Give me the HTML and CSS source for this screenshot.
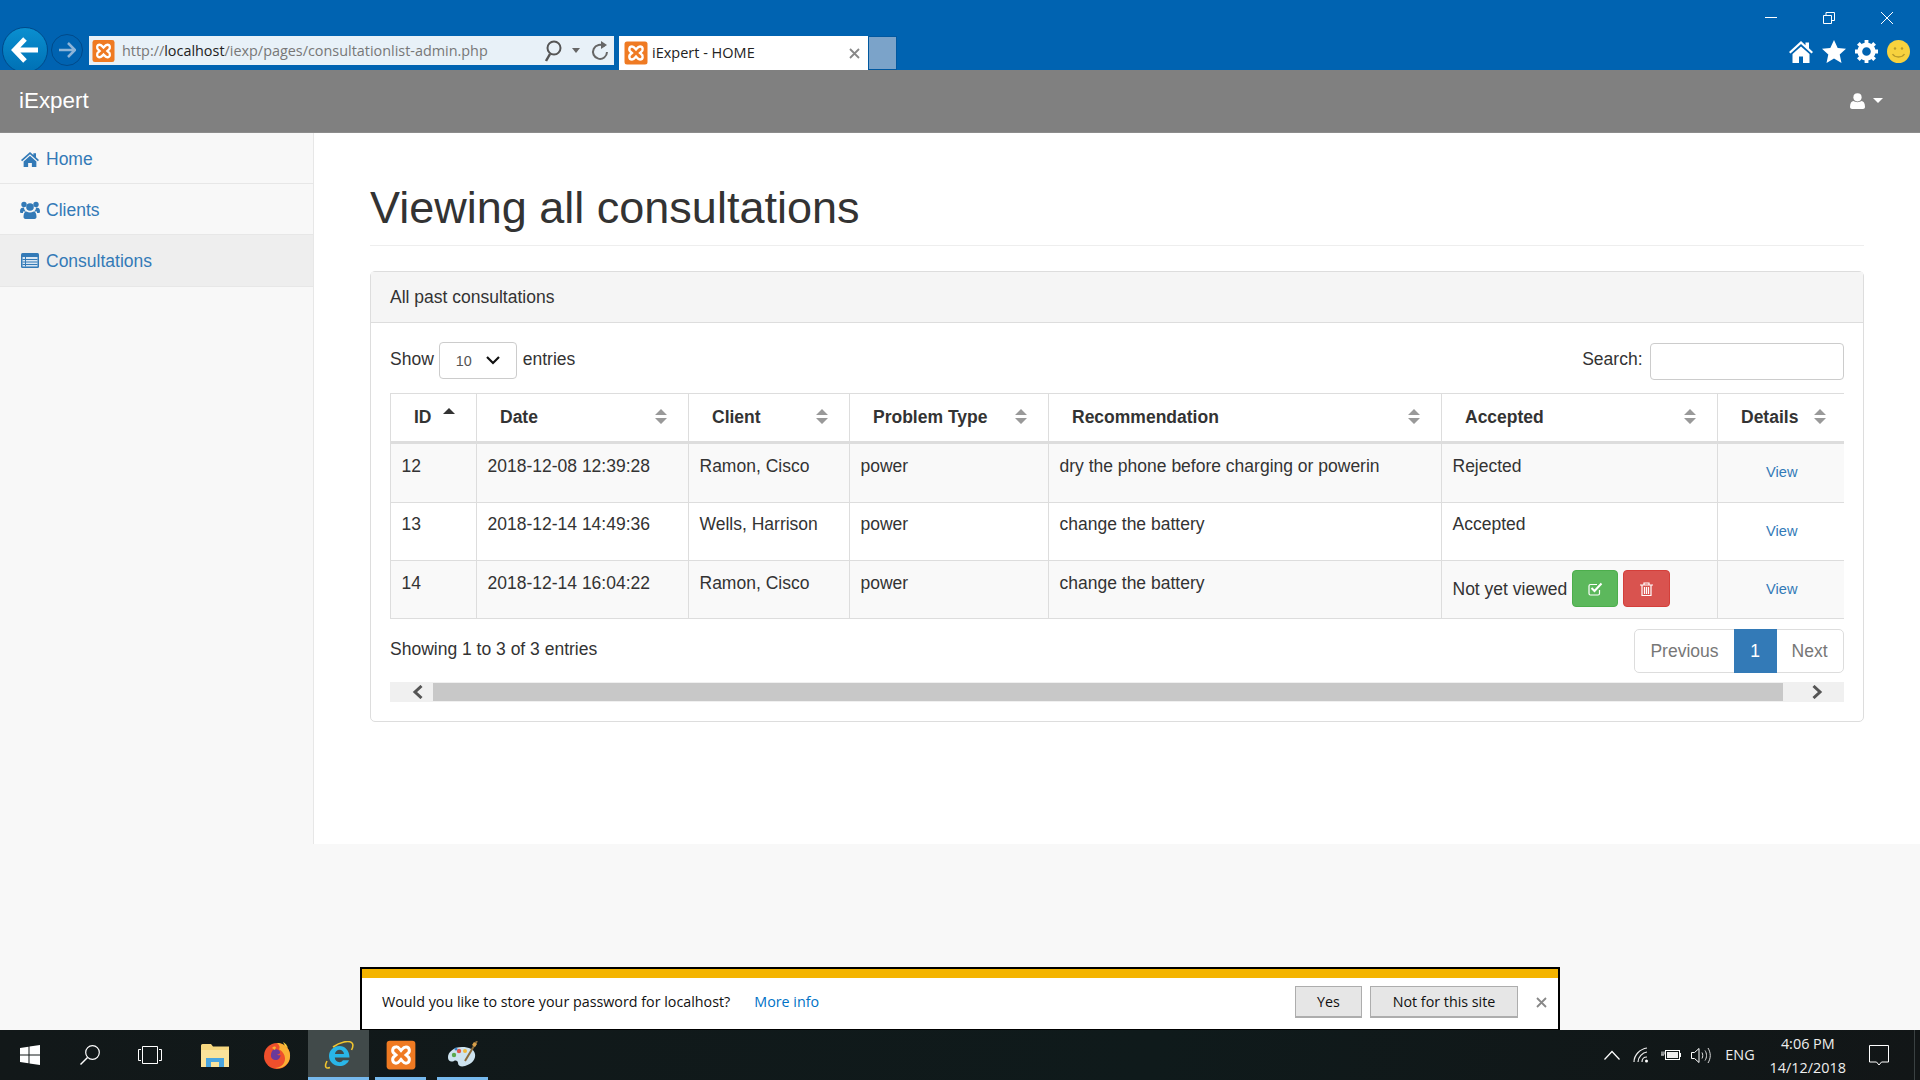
FILE: index.html
```html
<!DOCTYPE html>
<html lang="en">
<head>
  <meta charset="UTF-8">
  <title>iExpert - HOME</title>
  <link rel="stylesheet" href="styles.css">
</head>
<body>
  <svg class="defs" width="0" height="0">
    <symbol id="xampp" viewBox="0 0 24 24">
      <rect x="0.5" y="0.5" width="23" height="23" rx="2.5" fill="#ef7a22"/>
      <path d="M8 5.500c-3.200 0-3.400 4.200-1.200 5.400L8 12l-1.200 1.100C4.600 14.300 4.800 18.500 8 18.500c2 0 3-1.800 4-2.900 1 1.100 2 2.900 4 2.900 3.200 0 3.400-4.200 1.200-5.400L16 12l1.200-1.100c2.200-1.200 2-5.400-1.200-5.400-2 0-3 1.800-4 2.900-1-1.100-2-2.900-4-2.900z" fill="none" stroke="#fff" stroke-width="2.400"/>
    </symbol>
    <symbol id="sort" viewBox="0 0 12 15">
      <path d="M6 0l6 6H0zM0 9h12l-6 6z" fill="#999"/>
    </symbol>
  </svg>

  <!-- browser chrome -->
  <div class="chrome">
    <div class="nav-group">
      <div class="back-btn">
        <svg width="28" height="26" viewBox="0 0 28 26"><path d="M14 2L3.500 13 14 24M4 13h23" fill="none" stroke="#fff" stroke-width="5"/></svg>
      </div>
      <div class="forward-btn">
        <svg width="18" height="16" viewBox="0 0 18 16"><path d="M10 1l7 7-7 7M17 8H1" fill="none" stroke="#8db4d8" stroke-width="2.500"/></svg>
      </div>
      <div class="address-bar">
        <svg class="favicon" width="23" height="24"><use href="#xampp"/></svg>
        <span class="url">http://<b>localhost</b>/iexp/pages/consultationlist-admin.php</span>
        <svg class="addr-search" width="22" height="24" viewBox="0 0 22 24"><circle cx="13" cy="9" r="6.500" fill="none" stroke="#555" stroke-width="2"/><path d="M9 15l-4 7" stroke="#555" stroke-width="2.500"/></svg>
        <span class="addr-caret"></span>
        <svg class="addr-reload" width="18" height="22" viewBox="0 0 18 22"><path d="M13.500 6.500A7 7 0 1 0 16 12" fill="none" stroke="#666" stroke-width="2"/><path d="M10 1l6 4-6 4z" fill="#666"/></svg>
      </div>
      <div class="tab">
        <svg class="favicon" width="24" height="24"><use href="#xampp"/></svg>
        <span class="tab-title">iExpert - HOME</span>
        <svg class="tab-close" width="11" height="11" viewBox="0 0 11 11"><path d="M1 1l9 9M10 1l-9 9" stroke="#888" stroke-width="1.800"/></svg>
      </div>
      <div class="new-tab"></div>
    </div>
    <div class="chrome-right">
      <div class="window-controls">
        <svg width="12" height="12" viewBox="0 0 12 12"><path d="M0 5.500h12" stroke="#fff"/></svg>
        <svg width="12" height="12" viewBox="0 0 12 12"><path d="M0.500 3.500h8v8h-8zM3 3.500V0.500h8.500v8H8.500" fill="none" stroke="#fff"/></svg>
        <svg width="12" height="12" viewBox="0 0 12 12"><path d="M0 0l12 12M12 0L0 12" stroke="#fff"/></svg>
      </div>
      <div class="toolbar">
        <svg width="24" height="22" viewBox="0 0 24 22"><path d="M12 0L0 11l1.500 1.500L12 3l10.500 9.500L24 11l-4-3.700V1.500h-3.500v2.700zM3.500 13v9h6.500v-6.500h4V22h6.500v-9L12 5.500z" fill="#fff"/></svg>
        <svg width="24" height="23" viewBox="0 0 24 23"><path d="M12 0l3.700 8 8.300.800-6.300 5.600L19.500 23 12 18.500 4.500 23l1.800-8.600L0 8.800 8.300 8z" fill="#fff"/></svg>
        <svg width="23" height="23" viewBox="0 0 24 24"><circle cx="12" cy="12" r="7" fill="none" stroke="#fff" stroke-width="5"/><path d="M12 12V0M12 12V24M12 12H0M12 12H24M12 12L3.500 3.500M12 12L20.500 3.500M12 12L3.500 20.500M12 12L20.500 20.500" stroke="#fff" stroke-width="4" stroke-dasharray="0 8.500 4"/></svg>
        <svg width="23" height="23" viewBox="0 0 23 23"><circle cx="11.500" cy="11.500" r="11.500" fill="#f7d23e"/><circle cx="8" cy="8.500" r="1.200" fill="#b79a2a"/><circle cx="15" cy="8.500" r="1.200" fill="#b79a2a"/><path d="M5.500 14c2.500 4 9.500 4 12 0" fill="none" stroke="#b79a2a" stroke-width="1.400"/></svg>
      </div>
    </div>
  </div>

  <nav class="navbar">
    <a class="brand">iExpert</a>
    <div class="user-menu">
      <svg width="15" height="16" viewBox="0 0 15 16"><circle cx="7.500" cy="4.300" r="4.100" fill="#fff"/><path d="M0 14c0-4 1.500-6 3.500-6 2 1.500 6 1.500 8 0 2 0 3.500 2 3.500 6 0 1.300-1 2-2 2H2c-1 0-2-.700-2-2z" fill="#fff"/></svg>
      <span class="user-caret"></span>
    </div>
  </nav>

  <div class="page">
    <aside class="sidebar">
      <a class="side-item">
        <svg width="18" height="15" viewBox="0 0 24 20"><path d="M12 0L0 10.500l1.500 1.700L12 3l10.500 9.200 1.500-1.700-4-3.500V1.500h-3.500v2.400zM3.500 12.500V20h6v-5.500h5V20h6v-7.500L12 5z" fill="#337ab7"/></svg>
        Home
      </a>
      <a class="side-item">
        <svg class="side-users" width="20" height="18" viewBox="0 0 20 18"><circle cx="4" cy="3.500" r="2.700" fill="#337ab7"/><circle cx="16" cy="3.500" r="2.700" fill="#337ab7"/><circle cx="10" cy="6" r="3.800" fill="#337ab7"/><path d="M0 10c0-2.500 1.500-3.500 4-3.500 0 2 1 3 2 4H3v1.500H1c-.6 0-1-.5-1-2zM20 10c0-2.500-1.500-3.500-4-3.500 0 2-1 3-2 4h3v1.500h2c.6 0 1-.5 1-2z" fill="#337ab7"/><path d="M3.500 16c0-3.500 1-5.500 3-5.500 2 1.300 5 1.300 7 0 2 0 3 2 3 5.500 0 1.300-1 2-2 2h-9c-1 0-2-.7-2-2z" fill="#337ab7"/></svg>
        Clients
      </a>
      <a class="side-item active">
        <svg width="18" height="15" viewBox="0 0 18 15"><rect width="18" height="15" rx="1.500" fill="#337ab7"/><rect x="1.500" y="4" width="15" height="9.500" fill="#d9e6f2"/><path d="M1.500 6.500h15M1.500 9h15M1.500 11.500h15M4.500 4v9.500" stroke="#337ab7"/></svg>
        Consultations
      </a>
    </aside>

    <main class="content">
      <h1 class="page-header">Viewing all consultations</h1>

      <section class="panel">
        <div class="panel-heading">All past consultations</div>
        <div class="panel-body">
          <div class="table-controls">
            <label class="length">Show
              <span class="select-box">
                <span>10</span>
                <svg width="14" height="9" viewBox="0 0 14 9"><path d="M1 1l6 6 6-6" fill="none" stroke="#111" stroke-width="2.200"/></svg>
              </span>
              entries
            </label>
            <label class="search">Search: <input class="search-input" type="text"></label>
          </div>

          <table class="data-table">
            <colgroup>
              <col class="col-id"><col class="col-date"><col class="col-client"><col class="col-type">
              <col class="col-rec"><col class="col-acc"><col class="col-det">
            </colgroup>
            <thead>
              <tr>
                <th><div class="th-inner th-id">ID <span class="sort-up"></span></div></th>
                <th><div class="th-inner">Date <svg width="12" height="15"><use href="#sort"/></svg></div></th>
                <th><div class="th-inner">Client <svg width="12" height="15"><use href="#sort"/></svg></div></th>
                <th><div class="th-inner">Problem Type <svg width="12" height="15"><use href="#sort"/></svg></div></th>
                <th><div class="th-inner">Recommendation <svg width="12" height="15"><use href="#sort"/></svg></div></th>
                <th><div class="th-inner">Accepted <svg width="12" height="15"><use href="#sort"/></svg></div></th>
                <th class="th-last"><div class="th-inner">Details <svg width="12" height="15"><use href="#sort"/></svg></div></th>
              </tr>
            </thead>
            <tbody>
              <tr class="r1">
                <td>12</td>
                <td>2018-12-08 12:39:28</td>
                <td>Ramon, Cisco</td>
                <td>power</td>
                <td>dry the phone before charging or powerin</td>
                <td>Rejected</td>
                <td class="td-view"><a>View</a></td>
              </tr>
              <tr class="r2">
                <td>13</td>
                <td>2018-12-14 14:49:36</td>
                <td>Wells, Harrison</td>
                <td>power</td>
                <td>change the battery</td>
                <td>Accepted</td>
                <td class="td-view"><a>View</a></td>
              </tr>
              <tr class="r3">
                <td>14</td>
                <td>2018-12-14 16:04:22</td>
                <td>Ramon, Cisco</td>
                <td>power</td>
                <td>change the battery</td>
                <td class="td-actions">
                  <div class="actions">
                    Not yet viewed
                    <button class="btn btn-green">
                      <svg width="15" height="14" viewBox="0 0 15 14"><path d="M11.500 8v3.500a1.500 1.500 0 0 1-1.500 1.500H2.500A1.500 1.500 0 0 1 1 11.500V4a1.500 1.500 0 0 1 1.500-1.500H9" fill="none" stroke="#fff" stroke-width="1.200"/><path d="M3.500 6l3 3 7-7.500" fill="none" stroke="#fff" stroke-width="2"/></svg>
                    </button>
                    <button class="btn btn-red">
                      <svg width="13" height="14" viewBox="0 0 13 14"><path d="M0 3h13M4 3V1h5v2M2 3v10.500h9V3M4.500 5v7M6.500 5v7M8.500 5v7" fill="none" stroke="#fff" stroke-width="1.200"/></svg>
                    </button>
                  </div>
                </td>
                <td class="td-view"><a>View</a></td>
              </tr>
            </tbody>
          </table>

          <div class="table-footer">
            <div class="info">Showing 1 to 3 of 3 entries</div>
            <ul class="pagination">
              <li>Previous</li>
              <li class="current">1</li>
              <li>Next</li>
            </ul>
          </div>

          <div class="scrollbar">
            <div class="scroll-arrow">
              <svg width="12" height="14" viewBox="0 0 12 14"><path d="M9.500 1L3 7l6.500 6" fill="none" stroke="#555" stroke-width="3"/></svg>
            </div>
            <div class="scroll-thumb"></div>
            <div class="scroll-arrow scroll-arrow-right">
              <svg width="12" height="14" viewBox="0 0 12 14"><path d="M2.500 1L9 7l-6.500 6" fill="none" stroke="#555" stroke-width="3"/></svg>
            </div>
          </div>
        </div>
      </section>
    </main>
  </div>

  <div class="password-bar">
    <div class="password-row">
      <span class="password-text">Would you like to store your password for localhost?</span>
      <a class="more-info">More info</a>
      <button class="ie-btn ie-yes">Yes</button>
      <button class="ie-btn ie-no">Not for this site</button>
      <svg class="password-close" width="11" height="11" viewBox="0 0 11 11"><path d="M1 1l9 9M10 1l-9 9" stroke="#888" stroke-width="1.800"/></svg>
    </div>
  </div>

  <!-- windows taskbar -->
  <footer class="taskbar">
    <div class="task-icon">
      <svg width="20" height="20" viewBox="0 0 20 20"><path d="M0 3l8.500-1.200v7.700H0zM9.500 1.600L20 0v9.500H9.500zM0 10.500h8.500v7.700L0 17zM9.500 10.500H20V20L9.500 18.400z" fill="#fff"/></svg>
    </div>
    <div class="task-icon">
      <svg width="20" height="20" viewBox="0 0 20 20"><circle cx="12.500" cy="7.500" r="6.800" fill="none" stroke="#fff" stroke-width="1.200"/><path d="M7.500 12.500L0.500 19.500" stroke="#fff" stroke-width="1.400"/></svg>
    </div>
    <div class="task-icon">
      <svg width="24" height="18" viewBox="0 0 24 18"><path d="M4.500 0.500h15v17h-15zM3 3.500H0.500v11H3M21 3.500h2.500v11H21" fill="none" stroke="#fff"/></svg>
    </div>
    <div class="task-icon task-app task-first">
      <svg width="28" height="23" viewBox="0 0 28 23"><path d="M0 1.500A1.500 1.500 0 0 1 1.500 0H10l2 2.500h16V23H0z" fill="#f6d77f"/><path d="M0 6h28v17H0z" fill="#fbe39b"/><path d="M5 23V14h18v9h-5v-5h-8v5z" fill="#4aa5e0"/></svg>
    </div>
    <div class="task-icon task-app">
      <svg width="28" height="27" viewBox="0 0 28 27"><circle cx="14" cy="14" r="13" fill="#ef4f2c"/><path d="M14 1c5 0 9 2.500 11.500 6.500C28 12 27.500 18 24 22c-3 3.500-8 5-12 4 5 0 10-3.500 10-9.500 0-4-3-8-6-9 1-2 1-4-2-6.500z" fill="#fbb034"/><path d="M10 8c3-1.500 6-.5 7 2 .5 1.500-1 2.500-3 2.500 1 1 3 1 3.500.5 0 3-2.500 5.500-5.500 5-3-.5-4.500-3-4-5.500.2-2 1-3.500 2-4.500z" fill="#6a3a9a"/><path d="M9 6c1-1.500 3-2 4-1l-1 3z" fill="#fbb034"/><path d="M20 0c2 1 4 3 5 6l-3-2z" fill="#fdd23e"/></svg>
    </div>
    <div class="task-icon task-app task-active task-open">
      <svg width="30" height="28" viewBox="0 0 30 28"><path d="M15.500 5C9.500 5 5 9.500 5 15s4.500 10 10.500 10c4.500 0 8-2.300 9.500-5.800h-6c-1 1.300-2 2-3.500 2-2.700 0-4.700-2-4.700-4.700H25.500C25.500 9.500 21 5 15.500 5zM11 13c.3-2.300 2.200-4.200 4.500-4.200s4.200 1.900 4.500 4.200z" fill="#29b6e8"/><path d="M3 20C0 26 2 28 6 26.500M9 6C16 1 25-1 28 2c1.500 1.500 1 4-.5 7" fill="none" stroke="#f0c430" stroke-width="1.600"/></svg>
    </div>
    <div class="task-icon task-app task-open">
      <svg width="30" height="30"><use href="#xampp"/></svg>
    </div>
    <div class="task-icon task-app task-open">
      <svg width="30" height="28" viewBox="0 0 30 28"><path d="M14 6C6 6 0 11 0 16c0 5 4 5 6 4s4 0 4 2c0 3 3 4 7 3 7-2 11-7 10-12-1-5-6-7-13-7z" fill="#cde3ef"/><circle cx="6" cy="14" r="2.200" fill="#5aa84c"/><circle cx="11" cy="10" r="2.200" fill="#e2574c"/><circle cx="17" cy="10" r="2" fill="#f0b93a"/><circle cx="8" cy="8" r="1.500" fill="#3f86c9"/><path d="M29 0L17 20" stroke="#8a6a3a" stroke-width="2"/><path d="M26 1l3 2-2 3-3-2z" fill="#d9a04a"/></svg>
    </div>

    <div class="tray">
      <svg width="16" height="10" viewBox="0 0 16 10"><path d="M0.500 9.500L8 1.500l7.500 8" fill="none" stroke="#fff" stroke-width="1.200"/></svg>
      <svg class="tray-wifi" width="16" height="16" viewBox="0 0 16 16"><path d="M1 15C1 8 7 2 14 1M5 15C5 10 9.500 5.500 14 5M9 15c0-3 2-5 5-5" fill="none" stroke="#eee" stroke-width="1.200"/><circle cx="13.500" cy="14" r="1.500" fill="#fff"/></svg>
      <svg class="tray-battery" width="20" height="12" viewBox="0 0 20 12"><path d="M0 6h3M1 2.500v3M3 2.500v3" stroke="#fff"/><rect x="4.500" y="1.500" width="14" height="9" fill="none" stroke="#fff"/><rect x="6" y="3" width="11" height="6" fill="#eee"/><path d="M19 4h1v4h-1z" fill="#fff"/></svg>
      <svg class="tray-volume" width="20" height="17" viewBox="0 0 20 17"><path d="M0.500 5.500h3L8 1.500v14l-4.500-4h-3z" fill="none" stroke="#fff"/><path d="M11 5.500c1 2 1 4 0 6M14 3.500c2 3 2 7 0 10M17 1c3 5 3 10 0 15" fill="none" stroke="#ddd"/></svg>
      <span class="lang">ENG</span>
      <div class="clock"><span>4:06 PM</span><span>14/12/2018</span></div>
      <svg class="notify" width="20" height="21" viewBox="0 0 20 21"><path d="M0.500 0.500h19v16.500h-7l-2.500 3-2.500-3h-7z" fill="none" stroke="#fff"/></svg>
      <div class="show-desktop"></div>
    </div>
  </footer>
</body>
</html>
```

FILE: styles.css
```css
/* page frame */
* {
  box-sizing: border-box;
}
html, body {
  margin: 0;
  padding: 0;
}
body {
  position: relative;
  display: flex;
  flex-direction: column;
  height: 1080px;
  overflow: hidden;
  font-family: "Liberation Sans", Arial, sans-serif;
  font-size: 17.5px;
  line-height: 24px;
  color: #333;
  background-color: #f8f8f8;
}
.defs {
  position: absolute;
}

/* browser chrome */
.chrome {
  display: flex;
  flex: none;
  justify-content: space-between;
  height: 70px;
  overflow: hidden;
  background-color: #0063b1;
}
.nav-group {
  display: flex;
  align-items: flex-start;
  padding: 27px 0 0 2px;
}
.back-btn {
  display: flex;
  align-items: center;
  justify-content: center;
  width: 46px;
  height: 46px;
  border: 1px solid #004a8a;
  border-radius: 50%;
  background: linear-gradient(#0a8fd0, #0070b4);
}
.forward-btn {
  display: flex;
  align-items: center;
  justify-content: center;
  width: 32px;
  height: 32px;
  margin: 7px 0 0 3px;
  border: 1px solid #004a8a;
  border-radius: 50%;
}
.address-bar {
  display: flex;
  align-items: center;
  width: 525px;
  height: 29px;
  margin: 9px 0 0 6px;
  padding-left: 3px;
  background-color: #e8f1f8;
}
.favicon {
  flex: none;
}
.url {
  margin-left: 7px;
  font-family: "Open Sans", sans-serif;
  font-size: 14.4px;
  color: #777;
  white-space: nowrap;
}
.url b {
  font-weight: 400;
  color: #222;
}
.addr-search {
  margin-left: 53px;
}
.addr-caret {
  width: 0;
  height: 0;
  margin-left: 9px;
  border-left: 4px solid transparent;
  border-right: 4px solid transparent;
  border-top: 5px solid #666;
}
.addr-reload {
  margin-left: 11px;
}
.tab {
  display: flex;
  align-items: center;
  width: 249px;
  height: 34px;
  margin: 9px 0 0 5px;
  padding: 0 8px 0 5px;
  background-color: #fff;
}
.tab-title {
  flex: 1;
  margin-left: 4px;
  font-family: "Open Sans", sans-serif;
  font-size: 14.5px;
  color: #222;
}
.new-tab {
  width: 29px;
  height: 34px;
  margin-top: 9px;
  border: 1px solid #0058a0;
  background-color: #7ba3c9;
}
.chrome-right {
  display: flex;
  flex-direction: column;
  align-items: flex-end;
}
.window-controls {
  display: flex;
  gap: 46px;
  padding: 12px 27px 0 0;
}
.toolbar {
  display: flex;
  align-items: center;
  gap: 9px;
  margin-top: 16px;
  padding-right: 10px;
}

/* top navbar */
.navbar {
  display: flex;
  flex: none;
  align-items: center;
  justify-content: space-between;
  height: 63px;
  padding: 0 37px 1px 19px;
  background-color: #808080;
  border-bottom: 1px solid #8c8c8c;
}
.brand {
  font-size: 22.4px;
  color: #fff;
}
.user-menu {
  display: flex;
  align-items: center;
  gap: 8px;
}
.user-caret {
  width: 0;
  height: 0;
  border-left: 5.500px solid transparent;
  border-right: 5.500px solid transparent;
  border-top: 5.500px solid #fff;
}

/* sidebar + content */
.page {
  display: flex;
  flex: none;
  height: 711px;
  background-color: #fff;
}
.sidebar {
  flex: none;
  width: 314px;
  background-color: #f8f8f8;
  border-right: 1px solid #e7e7e7;
}
.side-item {
  display: flex;
  align-items: center;
  gap: 7px;
  height: 51px;
  padding: 2px 0 0 21px;
  color: #337ab7;
  border-bottom: 1px solid #e7e7e7;
}
.side-item .side-users {
  margin: 0 -1px 0 -1px;
}
.side-item.active {
  height: 52px;
  padding-top: 0;
  background-color: #eee;
}
.content {
  flex: 1;
  padding: 0 57px 0 56px;
}
.page-header {
  margin: 51px 0 25px;
  padding-bottom: 14px;
  font-size: 45px;
  font-weight: 500;
  line-height: 47px;
  color: #333;
  border-bottom: 1px solid #eee;
}

/* panel */
.panel {
  height: 451px;
  border: 1px solid #ddd;
  border-radius: 5px;
}
.panel-heading {
  height: 51px;
  padding: 13px 19px;
  background-color: #f5f5f5;
  border-bottom: 1px solid #ddd;
}
.panel-body {
  padding: 19px 19px 0;
}
.table-controls {
  display: flex;
  align-items: flex-start;
  justify-content: space-between;
  height: 38px;
  margin-bottom: 13px;
}
.length {
  display: flex;
  align-items: flex-start;
  gap: 5px;
  padding-top: 5px;
}
.select-box {
  display: flex;
  align-items: center;
  justify-content: space-between;
  width: 78px;
  height: 37px;
  margin: -5px 1px 0 0;
  padding: 0 16px;
  font-size: 14.400px;
  color: #555;
  border: 1px solid #ccc;
  border-radius: 4px;
}
.search {
  display: flex;
  align-items: flex-start;
  gap: 7px;
  padding-top: 5px;
}
.search-input {
  width: 194px;
  height: 37px;
  margin-top: -4px;
  border: 1px solid #ccc;
  border-radius: 4px;
  background-color: #fff;
}

/* table */
.data-table {
  width: 1453px;
  table-layout: fixed;
  border-collapse: collapse;
  border-top: 1px solid #ddd;
  border-left: 1px solid #ddd;
}
.col-id { width: 86px; }
.col-date { width: 212px; }
.col-client { width: 161px; }
.col-type { width: 199px; }
.col-rec { width: 393px; }
.col-acc { width: 276px; }
.col-det { width: 126px; }
.data-table th {
  height: 49px;
  padding: 0 21px 2px 23px;
  font-weight: 700;
  text-align: left;
  color: #333;
  border-left: 1px solid #ddd;
  border-bottom: 3px solid #ddd;
}
.data-table th.th-last {
  padding-right: 18px;
}
.th-inner {
  display: flex;
  align-items: center;
  justify-content: space-between;
  white-space: nowrap;
}
.th-id {
  justify-content: flex-start;
  align-items: flex-start;
  gap: 11px;
}
.sort-up {
  width: 0;
  height: 0;
  margin-top: 3px;
  border-left: 6px solid transparent;
  border-right: 6px solid transparent;
  border-bottom: 6px solid #333;
}
.data-table td {
  padding: 10px 10px 0 10.5px;
  vertical-align: top;
  white-space: nowrap;
  border-left: 1px solid #ddd;
  border-bottom: 1px solid #ddd;
}
.data-table .r1 td { height: 60px; }
.data-table .r2 td { height: 58px; padding-top: 9px; }
.data-table .r3 td { height: 58px; }
.r1, .r3 {
  background-color: #f9f9f9;
}
.data-table td.td-view {
  padding: 0 0 2px 2px;
  font-size: 14.6px;
  text-align: center;
  vertical-align: middle;
  color: #337ab7;
}
.data-table td.td-actions {
  padding-top: 9px;
}
.actions {
  display: flex;
  align-items: center;
  gap: 5px;
}
.btn {
  display: flex;
  align-items: center;
  justify-content: center;
  width: 46px;
  height: 37px;
  padding: 0;
  border-radius: 4px;
}
.btn-green {
  background-color: #5cb85c;
  border: 1px solid #4cae4c;
}
.btn-red {
  width: 47px;
  background-color: #d9534f;
  border: 1px solid #d43f3a;
}

/* table footer */
.table-footer {
  display: flex;
  align-items: flex-start;
  justify-content: space-between;
  height: 63px;
  padding-top: 10px;
}
.info {
  padding-top: 8px;
}
.pagination {
  display: flex;
  height: 44px;
  margin: 0;
  padding: 0;
  list-style: none;
  color: #777;
  border: 1px solid #ddd;
  border-radius: 5px;
}
.pagination li {
  padding: 9px 15px;
}
.pagination .current {
  width: 43px;
  margin: -1px 0;
  padding-top: 10px;
  text-align: center;
  color: #fff;
  background-color: #337ab7;
}
.scrollbar {
  display: flex;
  align-items: center;
  height: 20px;
  background-color: #f0f0f0;
}
.scroll-arrow {
  display: flex;
  align-items: center;
  justify-content: center;
  width: 43px;
  padding-left: 12px;
}
.scroll-arrow-right {
  width: 61px;
  padding-left: 7px;
}
.scroll-thumb {
  flex: 1;
  height: 18px;
  background-color: #c8c8c8;
}

/* IE password prompt, lies over the page */
.password-bar {
  position: absolute;
  left: 360px;
  top: 967px;
  width: 1200px;
  height: 63px;
  padding-top: 8px;
  background: linear-gradient(#f4b400, #f4b400) no-repeat 0 0 / 100% 9px #fff;
  border: 2px solid #000;
  border-bottom-width: 1px;
}
.password-row {
  display: flex;
  align-items: center;
  height: 50px;
  padding-left: 20px;
  font-family: "Open Sans", sans-serif;
  font-size: 14.3px;
  color: #111;
}
.more-info {
  margin-left: 24px;
  color: #0072c6;
}
.ie-btn {
  height: 32px;
  padding: 0;
  font-family: "Open Sans", sans-serif;
  font-size: 14.3px;
  color: #111;
  background-color: #e6e6e6;
  border: 1px solid #adadad;
  border-bottom-width: 2px;
}
.ie-yes {
  width: 67px;
  margin-left: auto;
}
.ie-no {
  width: 148px;
  margin-left: 8px;
}
.password-close {
  margin: 0 11px 0 18px;
}

/* taskbar */
.taskbar {
  display: flex;
  flex: none;
  align-items: stretch;
  height: 50px;
  margin-top: auto;
  background: linear-gradient(100deg, #121819, #0f1a1b 60%, #121617);
  font-family: "Open Sans", sans-serif;
  color: #eee;
}
.task-icon {
  position: relative;
  display: flex;
  align-items: center;
  justify-content: center;
  width: 60px;
}
.task-app {
  width: 61px;
  margin-right: 1px;
}
.task-first {
  margin-left: 4px;
}
.task-active {
  background-color: #414a4a;
}
.task-open::after {
  content: "";
  position: absolute;
  left: 5px;
  right: 5px;
  bottom: 0;
  height: 3px;
  background-color: #76b9ed;
}
.task-active::after {
  left: 0;
  right: 0;
}
.tray {
  display: flex;
  align-items: center;
  margin-left: auto;
}
.tray .tray-wifi {
  margin-left: 13px;
}
.tray .tray-battery {
  margin-left: 12px;
}
.tray .tray-volume {
  margin-left: 10px;
}
.lang {
  margin-left: 14px;
  font-size: 14.4px;
}
.clock {
  display: flex;
  flex-direction: column;
  align-items: center;
  margin-left: 15px;
  padding-top: 2px;
  font-size: 14.4px;
  line-height: 24px;
}
.tray .notify {
  margin-left: 23px;
}
.show-desktop {
  align-self: stretch;
  width: 1px;
  margin-left: 25px;
  margin-right: 5px;
  background-color: #3a4142;
}
```
